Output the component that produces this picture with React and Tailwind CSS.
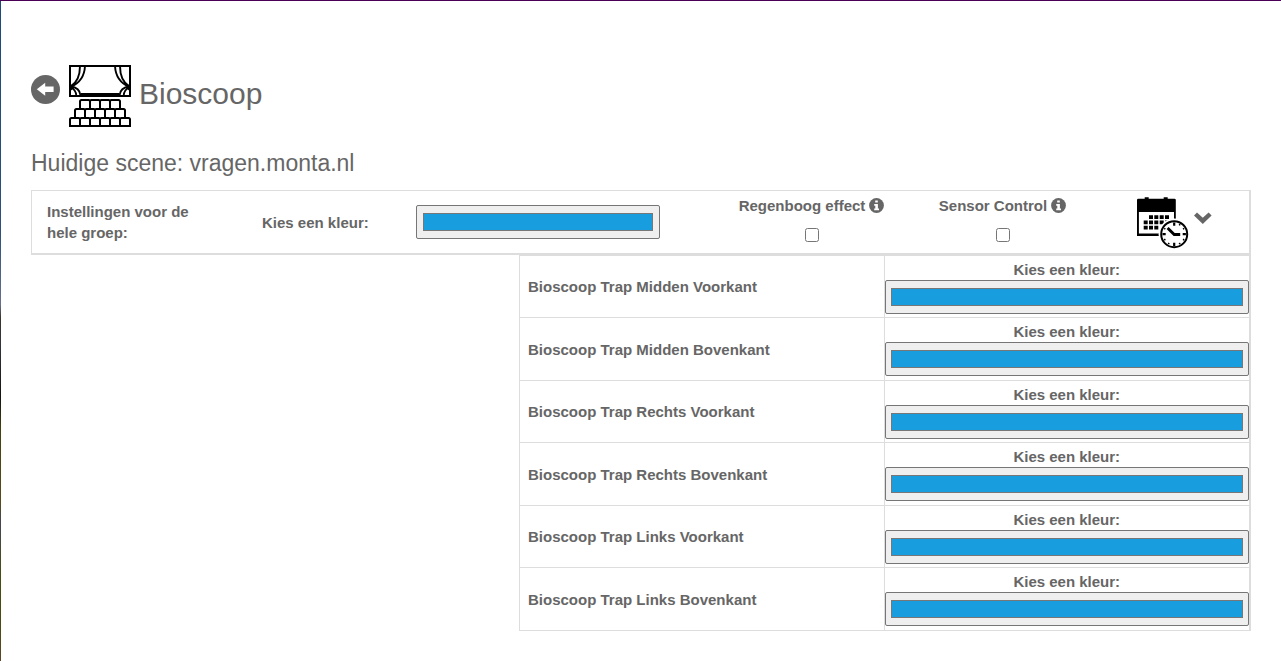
import { useState } from "react";

const FIXTURES = [
  "Bioscoop Trap Midden Voorkant",
  "Bioscoop Trap Midden Bovenkant",
  "Bioscoop Trap Rechts Voorkant",
  "Bioscoop Trap Rechts Bovenkant",
  "Bioscoop Trap Links Voorkant",
  "Bioscoop Trap Links Bovenkant",
];

const BASE_COLOR = "#189ddf";

function BackIcon() {
  return (
    <svg viewBox="0 0 30 30" className="block size-[30px]" aria-hidden="true">
      <circle cx="14.5" cy="14.5" r="14.5" fill="#666" />
      <path d="M5.800 14.300 14.200 7.800V11.600H22.600V17H14.200V20.800Z" fill="#fff" />
    </svg>
  );
}

function CinemaIcon() {
  return (
    <svg viewBox="0 0 62 62" className="size-[62px] shrink-0" fill="none" stroke="#000" strokeWidth="2" aria-hidden="true">
      <rect x="1" y="1" width="60" height="30" />
      <path d="M11.500 29H50.500" />
      <path d="M16 1C15.500 11 10 18.500 1.500 22M11 1C11 11 7.500 18 1.500 21.500" strokeWidth="1.9" />
      <path d="M46 1C46.500 11 52 18.500 60.500 22M51 1C51 11 54.500 18 60.500 21.500" strokeWidth="1.9" />
      <path d="M1.500 21.500C7 22 11 25 11.500 30.500M1.500 22C4.500 23.500 7 26 7.300 30.500M1.200 20 4.500 22.500 1.200 25Z" strokeWidth="1.8" />
      <path d="M60.500 21.500C55 22 51 25 50.500 30.500M60.500 22C57.500 23.500 55 26 54.700 30.500M60.800 20 57.500 22.500 60.800 25Z" strokeWidth="1.8" />
      <path d="M11 43V36.500Q11 35 12.500 35H19.500Q21 35 21 36.500V43M21 36.500Q21 35 22.500 35H29.500Q31 35 31 36.500V43M31 36.500Q31 35 32.500 35H39.500Q41 35 41 36.500V43M41 36.500Q41 35 42.500 35H49.500Q51 35 51 36.500V43" />
      <path d="M6 52V45.500Q6 44 7.500 44H14.500Q16 44 16 45.500V52M16 45.500Q16 44 17.500 44H24.500Q26 44 26 45.500V52M26 45.500Q26 44 27.500 44H34.500Q36 44 36 45.500V52M36 45.500Q36 44 37.500 44H44.500Q46 44 46 45.500V52M46 45.500Q46 44 47.500 44H54.500Q56 44 56 45.500V52" />
      <path d="M1 61V54.500Q1 53 2.500 53H9.500Q11 53 11 54.500V61M11 54.500Q11 53 12.500 53H19.500Q21 53 21 54.500V61M21 54.500Q21 53 22.500 53H29.500Q31 53 31 54.500V61M31 54.500Q31 53 32.500 53H39.500Q41 53 41 54.500V61M41 54.500Q41 53 42.500 53H49.500Q51 53 51 54.500V61M51 54.500Q51 53 52.500 53H59.500Q61 53 61 54.500V61M0 61H62" />
    </svg>
  );
}

function InfoIcon() {
  return (
    <svg viewBox="0 0 15 15" className="size-[15px] shrink-0" aria-hidden="true">
      <circle cx="7.5" cy="7.5" r="7.4" fill="#666" />
      <path d="M6.200 2.400H8.800V4.600H6.200ZM5.200 6H8.900V10.500H10V12.200H5.200V10.500H6.300V7.700H5.200Z" fill="#fff" />
    </svg>
  );
}

function ScheduleIcon() {
  return (
    <svg viewBox="0 0 52 52" className="size-[52px]" aria-hidden="true">
      <path d="M0 3Q0 1.700 1.300 1.700H7.700V.3H11.700V1.700H26.700V.3H30.700V1.700H37.500Q38.800 1.700 38.800 3V39H0Z" />
      <path d="M1.900 15H37V36.500H1.900Z" fill="#fff" />
      <path d="M12 18.200h4v3.800h-4zM17.300 18.200h4v3.800h-4zM22.700 18.200h4v3.800h-4zM28 18.200h4v3.800h-4zM6.700 23.500h4v3.800h-4zM12 23.500h4v3.800h-4zM17.300 23.500h4v3.800h-4zM22.700 23.500h4v3.800h-4zM28 23.500h4v3.800h-4zM6.700 28.800h4v3.800h-4zM12 28.800h4v3.800h-4zM17.300 28.800h4v3.800h-4z" />
      <circle cx="37.200" cy="37.200" r="15.600" fill="#fff" />
      <circle cx="37.200" cy="37.200" r="13" fill="#fff" stroke="#000" strokeWidth="2" />
      <path d="M37.200 25.500v3.200M37.200 45.700v3.200M25.500 37.200h3.200M45.700 37.200h3.200" stroke="#000" strokeWidth="2.200" />
      <path d="M43 27.200l-.7 1.200M47.200 31.400l-1.200.7M47.200 43l-1.200-.7M43 47.200l-.7-1.200M31.400 47.200l.7-1.200M27.200 43l1.200-.7M27.200 31.400l1.200.7" stroke="#000" strokeWidth="1.600" />
      <path d="M30.600 31 37.200 37.500H43.200" fill="none" stroke="#000" strokeWidth="2.900" />
    </svg>
  );
}

function ChevronIcon() {
  return (
    <svg viewBox="0 0 18 12" className="h-3 w-[18px]" aria-hidden="true">
      <path d="M0 3.500 3 .5 8.800 5.700 14.600 .5 17.600 3.500 8.800 12Z" fill="#666" />
    </svg>
  );
}

function ColorInput({ id, className }) {
  const [color, setColor] = useState(BASE_COLOR);
  return (
    <input
      id={id}
      type="color"
      value={color}
      onChange={(e) => setColor(e.target.value)}
      className={`block h-[34px] w-full cursor-pointer rounded-[2px] border border-[#767676] bg-[#efefef] py-[3px] [&::-webkit-color-swatch]:rounded-none [&::-webkit-color-swatch]:border [&::-webkit-color-swatch]:border-solid [&::-webkit-color-swatch]:border-[#777] [&::-webkit-color-swatch-wrapper]:px-0.5 [&::-webkit-color-swatch-wrapper]:py-1 ${className}`}
    />
  );
}

function Toggle({ id, label }) {
  return (
    <div className="flex flex-col items-center gap-3 pb-2">
      <label htmlFor={id} className="flex items-center gap-1 whitespace-nowrap">
        {label}
        <InfoIcon />
      </label>
      <input id={id} type="checkbox" className="size-[14px]" />
    </div>
  );
}

export default function App() {
  return (
    <div className="flex min-h-screen flex-col border-t border-[#4b0055] bg-white font-['Liberation_Sans',Arial,sans-serif] text-[15px] leading-[21px] text-[#666]">
      <div className="flex grow">
        <div className="w-px shrink-0 bg-linear-to-b from-[#1d4a77] via-[#25232b] to-[#5b4a22] bg-[linear-gradient(to_bottom,#1d4a77_0%,#2c517c_35%,#69708c_46%,#3a342c_48%,#34343f_52%,#141410_60%,#46420f_65%,#5a4a1c_76%,#464653_79%,#45500f_87%,#4b4a12_94%,#5e4626_100%)]" />
        <main className="min-w-0 grow px-[30px] pt-16">
          <header className="flex items-center gap-2">
            <a href="#terug" aria-label="Terug" className="-mt-3">
              <BackIcon />
            </a>
            <CinemaIcon />
            <h1 className="pb-1 text-[30px] leading-8">Bioscoop</h1>
          </header>
          <h2 className="mt-[23px] mb-[14px] text-[23px] leading-[26px]">Huidige scene: vragen.monta.nl</h2>

          <section className="grid min-h-[65px] grid-cols-[215fr_154fr_315fr_191fr_191fr_151fr] items-center border-t border-r-2 border-b-2 border-l border-[#ddd] font-bold">
            <p className="pr-10 pl-[15px]">Instellingen voor de hele groep:</p>
            <label htmlFor="groep-kleur" className="pl-[15px]">
              Kies een kleur:
            </label>
            <div className="pr-14 pl-[15px]">
              <ColorInput id="groep-kleur" className="px-1" />
            </div>
            <Toggle id="regenboog" label="Regenboog effect" />
            <Toggle id="sensor" label="Sensor Control" />
            <div className="flex items-center gap-[5px] pl-[39px]">
              <button type="button" aria-label="Planning" className="pt-px">
                <ScheduleIcon />
              </button>
              <button type="button" aria-label="Uitklappen" className="-mt-2">
                <ChevronIcon />
              </button>
            </div>
          </section>

          <ul className="ml-auto w-3/5 border-t border-r-2 border-l border-[#ddd] font-bold">
            {FIXTURES.map((name, i) => (
              <li key={name} className="grid grid-cols-2 border-b border-[#ddd] odd:h-[62px] even:h-[63px]">
                <div className="flex items-center border-r border-[#ddd] pl-2">{name}</div>
                <div className="pt-[3px]">
                  <label htmlFor={`kleur-${i}`} className="block text-center">
                    Kies een kleur:
                  </label>
                  <ColorInput id={`kleur-${i}`} className="px-[3px]" />
                </div>
              </li>
            ))}
          </ul>
        </main>
      </div>
    </div>
  );
}
